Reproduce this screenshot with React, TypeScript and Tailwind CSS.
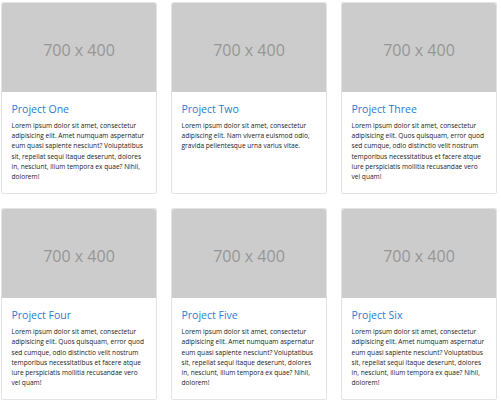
const TEXT_A = [
  'Lorem ipsum dolor sit amet, consectetur',
  'adipisicing elit. Amet numquam aspernatur',
  'eum quasi sapiente nesciunt? Voluptatibus',
  'sit, repellat sequi itaque deserunt, dolores',
  'in, nesciunt, illum tempora ex quae? Nihil,',
  'dolorem!',
];
const TEXT_B = [
  'Lorem ipsum dolor sit amet, consectetur',
  'adipiscing elit. Nam viverra euismod odio,',
  'gravida pellentesque urna varius vitae.',
];
const TEXT_C = [
  'Lorem ipsum dolor sit amet, consectetur',
  'adipisicing elit. Quos quisquam, error quod',
  'sed cumque, odio distinctio velit nostrum',
  'temporibus necessitatibus et facere atque',
  'iure perspiciatis mollitia recusandae vero',
  'vel quam!',
];

const projects = [
  { title: 'Project One', lines: TEXT_A },
  { title: 'Project Two', lines: TEXT_B },
  { title: 'Project Three', lines: TEXT_C },
  { title: 'Project Four', lines: TEXT_C },
  { title: 'Project Five', lines: TEXT_A },
  { title: 'Project Six', lines: TEXT_A },
];

function ProjectCard({ title, lines }: { title: string; lines: string[] }) {
  return (
    <div className="flex flex-col rounded-[2px] border border-[#e3e3e3] bg-white">
      <div className="flex h-[89px] items-center justify-center rounded-t-[2px] bg-[#cccccc] pt-[5px] text-[16px] text-[#969696]">
        700 x 400
      </div>
      <div className="px-[9.5px] pt-[11px] pb-[11px]">
        <h4 className="mb-[6px] text-[10.5px] leading-[12px] text-[#2a7bd6]">
          <a href="#">{title}</a>
        </h4>
        <p className="text-[6.6px] leading-[10.2px] text-[#222222]">
          {lines.map((line) => (
            <span key={line} className="block whitespace-nowrap">
              {line}
            </span>
          ))}
        </p>
      </div>
    </div>
  );
}

export default function App() {
  return (
    <div
      className="h-[400px] w-[501px] overflow-hidden bg-white pl-[1px] pt-[2px]"
      style={{ fontFamily: '"Open Sans", "Noto Sans", sans-serif' }}
    >
      <div className="grid grid-cols-[156px_156px_156px] gap-x-[14px] gap-y-[14px]">
        {projects.map((p) => (
          <ProjectCard key={p.title} title={p.title} lines={p.lines} />
        ))}
      </div>
    </div>
  );
}
